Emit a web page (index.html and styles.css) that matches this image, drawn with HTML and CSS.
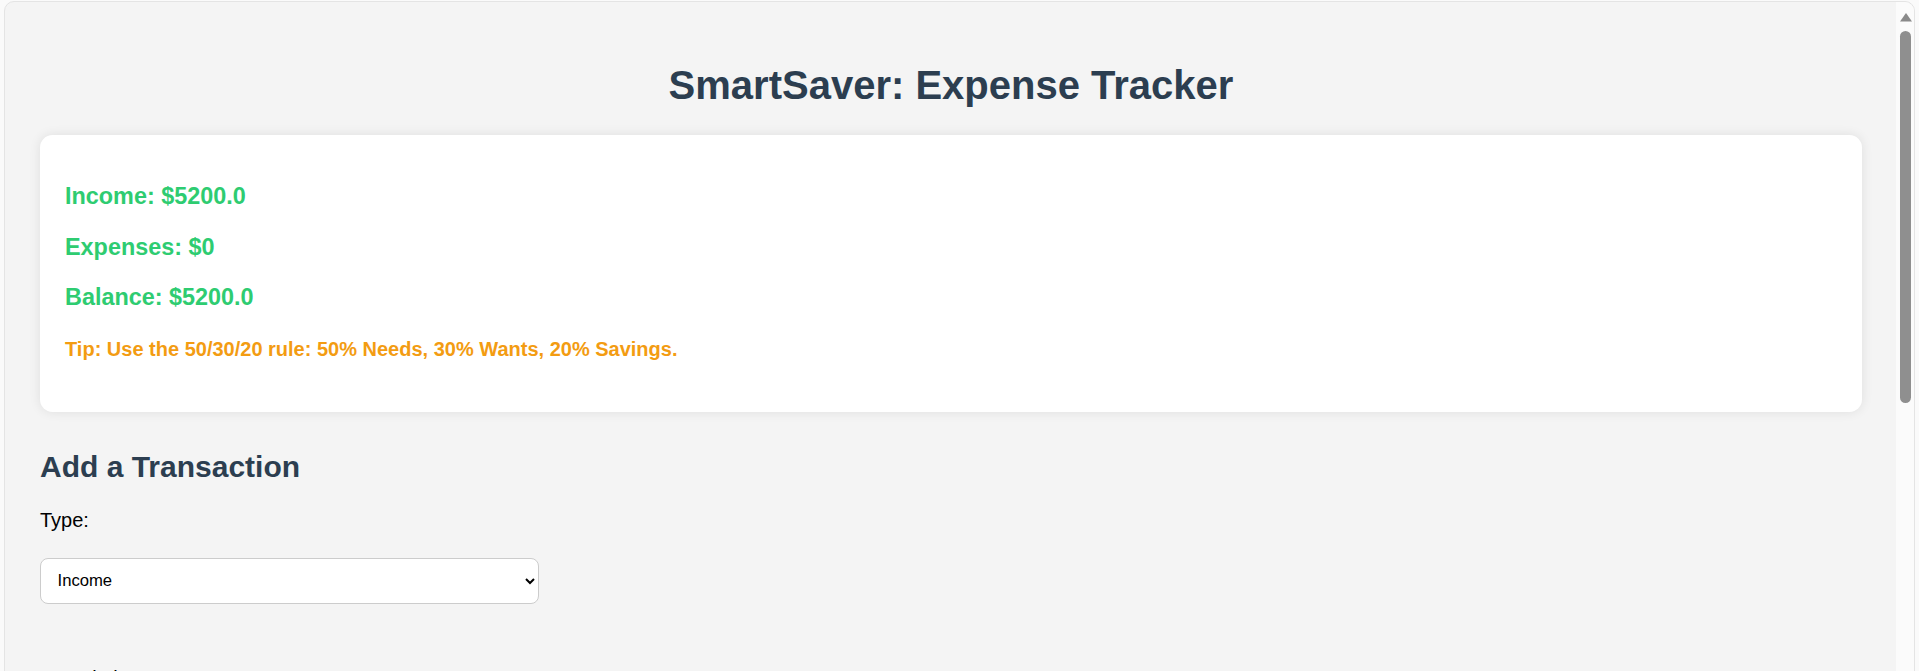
FILE: index.html
```html
<!DOCTYPE html>
<html lang="en">
<head>
<meta charset="utf-8">
<title>SmartSaver: Expense Tracker</title>
<link rel="stylesheet" href="styles.css">
</head>
<body>
<div class="frame">
  <div class="viewport">
    <main class="page">
      <h1 class="title">SmartSaver: Expense Tracker</h1>
      <section class="summary">
        <h3 class="stat">Income: $5200.0</h3>
        <h3 class="stat">Expenses: $0</h3>
        <h3 class="stat">Balance: $5200.0</h3>
        <h4 class="tip">Tip: Use the 50/30/20 rule: 50% Needs, 30% Wants, 20% Savings.</h4>
      </section>
      <h2 class="section-title">Add a Transaction</h2>
      <form class="tx-form">
        <label class="field-label" for="type">Type:</label>
        <select class="field-select" id="type">
          <option>Income</option>
          <option>Expense</option>
        </select>
        <label class="field-label field-gap" for="desc">Description:</label>
        <input class="field-select" id="desc" type="text">
        <label class="field-label field-gap" for="amount">Amount:</label>
        <input class="field-select" id="amount" type="number">
        <button class="add-btn" type="button">Add Transaction</button>
      </form>
    </main>
  </div>
  <div class="scrollbar">
    <svg class="sb-arrow" width="14" height="10" viewBox="0 0 14 10"><polygon points="7,1 13,9.5 1,9.5" fill="#8a8a8a"/></svg>
    <div class="sb-thumb"></div>
  </div>
</div>
</body>
</html>
```
FILE: styles.css
```css
html, body {
  margin: 0;
  padding: 0;
  height: 100%;
  overflow: hidden;
  background: #fafafa;
}
.frame {
  margin: 1px 4px 0 4px;
  height: 720px;
  border: 1px solid #e4e4e4;
  border-radius: 10px;
  background: #f4f4f4;
  display: flex;
  overflow: hidden;
}
.viewport {
  flex: 1;
  overflow: hidden;
}
.page {
  padding: 60px 34px 0 35px;
  font-family: "Liberation Sans", Arial, sans-serif;
  color: #000;
}
.title {
  margin: 0 0 27px;
  font-size: 40px;
  line-height: 46px;
  font-weight: bold;
  color: #2c3e50;
  text-align: center;
}
.summary {
  background: #fff;
  border-radius: 12.5px;
  padding: 25px 25px 25px;
  margin-bottom: 37.5px;
  box-shadow: 0 0 12px rgba(0, 0, 0, 0.09);
}
.stat {
  margin: 23.4px 0;
  font-size: 23.4px;
  line-height: 27px;
  font-weight: bold;
  color: #2ecc71;
}
.tip {
  margin: 26.6px 0;
  font-size: 20px;
  line-height: 23px;
  font-weight: bold;
  color: #f39c12;
}
.section-title {
  margin: 0 0 25px;
  font-size: 30px;
  line-height: 34px;
  font-weight: bold;
  color: #2c3e50;
}
.tx-form {
  display: flex;
  flex-direction: column;
  align-items: flex-start;
}
.field-label {
  display: block;
  font-size: 20px;
  line-height: 23px;
}
.field-gap {
  margin-top: 63px;
}
.field-select {
  margin-top: 26px;
  width: 499px;
  height: 46px;
  box-sizing: border-box;
  padding: 0 12.5px;
  border: 1px solid #cccccc;
  border-radius: 8px;
  background: #fff;
  font-family: "Liberation Sans", Arial, sans-serif;
  font-size: 16.67px;
  color: #000;
}
.add-btn {
  margin-top: 30px;
  padding: 12px 25px;
  border: none;
  border-radius: 8px;
  background: #2ecc71;
  color: #fff;
  font-size: 20px;
}
.scrollbar {
  width: 18px;
  flex: none;
  background: #fbfbfb;
  display: flex;
  flex-direction: column;
  align-items: center;
}
.sb-arrow {
  margin-top: 10px;
  margin-left: 2px;
  display: block;
}
.sb-thumb {
  margin-top: 9px;
  margin-left: 1px;
  width: 11px;
  height: 372px;
  border-radius: 6px;
  background: #8f8f8f;
}
```
